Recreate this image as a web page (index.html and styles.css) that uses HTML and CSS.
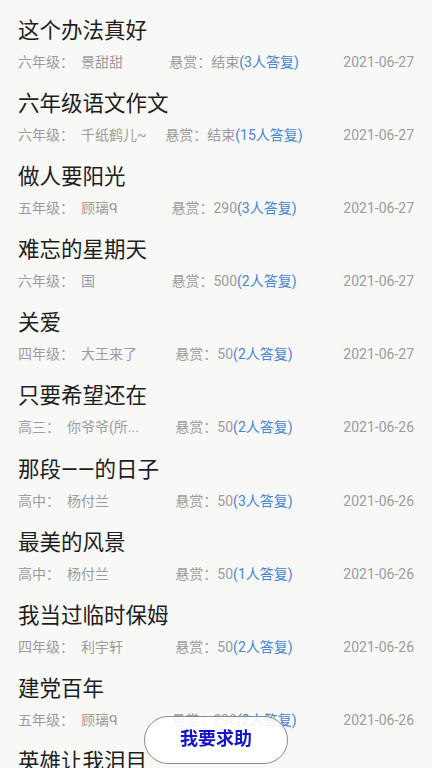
FILE: index.html
```html
<!DOCTYPE html>
<html lang="zh-CN">
<head>
<meta charset="utf-8">
<title>求助列表</title>
<link rel="stylesheet" href="styles.css">
</head>
<body>
<div class="list">
  <div class="item"><div class="title">这个办法真好</div><div class="meta"><span class="who"><span class="grade">六年级：</span><span class="name">景甜甜</span></span><span class="reward">悬赏：结束<span class="ans">(3人答复)</span></span><span class="date">2021-06-27</span></div></div>
  <div class="item"><div class="title">六年级语文作文</div><div class="meta"><span class="who"><span class="grade">六年级：</span><span class="name">千纸鹤儿~</span></span><span class="reward">悬赏：结束<span class="ans">(15人答复)</span></span><span class="date">2021-06-27</span></div></div>
  <div class="item"><div class="title">做人要阳光</div><div class="meta"><span class="who"><span class="grade">五年级：</span><span class="name">顾璃ᑫ</span></span><span class="reward">悬赏：290<span class="ans">(3人答复)</span></span><span class="date">2021-06-27</span></div></div>
  <div class="item"><div class="title">难忘的星期天</div><div class="meta"><span class="who"><span class="grade">六年级：</span><span class="name">国</span></span><span class="reward">悬赏：500<span class="ans">(2人答复)</span></span><span class="date">2021-06-27</span></div></div>
  <div class="item"><div class="title">关爱</div><div class="meta"><span class="who"><span class="grade">四年级：</span><span class="name">大王来了</span></span><span class="reward">悬赏：50<span class="ans">(2人答复)</span></span><span class="date">2021-06-27</span></div></div>
  <div class="item"><div class="title">只要希望还在</div><div class="meta"><span class="who"><span class="grade">高三：</span><span class="name">你爷爷(所...</span></span><span class="reward">悬赏：50<span class="ans">(2人答复)</span></span><span class="date">2021-06-26</span></div></div>
  <div class="item"><div class="title">那段——的日子</div><div class="meta"><span class="who"><span class="grade">高中：</span><span class="name">杨付兰</span></span><span class="reward">悬赏：50<span class="ans">(3人答复)</span></span><span class="date">2021-06-26</span></div></div>
  <div class="item"><div class="title">最美的风景</div><div class="meta"><span class="who"><span class="grade">高中：</span><span class="name">杨付兰</span></span><span class="reward">悬赏：50<span class="ans">(1人答复)</span></span><span class="date">2021-06-26</span></div></div>
  <div class="item"><div class="title">我当过临时保姆</div><div class="meta"><span class="who"><span class="grade">四年级：</span><span class="name">利宇轩</span></span><span class="reward">悬赏：50<span class="ans">(2人答复)</span></span><span class="date">2021-06-26</span></div></div>
  <div class="item"><div class="title">建党百年</div><div class="meta"><span class="who"><span class="grade">五年级：</span><span class="name">顾璃ᑫ</span></span><span class="reward">悬赏：290<span class="ans">(2人答复)</span></span><span class="date">2021-06-26</span></div></div>
  <div class="item"><div class="title">英雄让我泪目</div></div>
</div>
<button class="help">我要求助</button>
</body>
</html>
```
FILE: styles.css
```css
html, body {
  margin: 0;
  padding: 0;
  height: 768px;
  overflow: hidden;
  background: #f8f8f7;
  font-family: Roboto, "Noto Sans CJK SC", sans-serif;
}
.list {
  display: flex;
  flex-direction: column;
}
.item {
  height: 73.1px;
  box-sizing: border-box;
  padding: 16px 18px 0 18px;
}
.title {
  font-size: 21.5px;
  line-height: 30px;
  color: #1e1e1e;
}
.meta {
  margin-top: 6px;
  display: grid;
  grid-template-columns: 132px 168px 1fr;
  align-items: center;
  font-size: 14px;
  line-height: 20px;
  color: #9c9c9c;
}
.who {
  display: flex;
  white-space: nowrap;
}
.name {
  margin-left: 7px;
}
.reward {
  text-align: center;
  white-space: nowrap;
}
.ans {
  color: #4a85d0;
}
.date {
  text-align: right;
}
.help {
  position: fixed;
  left: 144px;
  top: 716px;
  width: 144px;
  height: 48px;
  border-radius: 24px;
  border: 1px solid #8c8c8c;
  background: rgba(255, 255, 255, 0.88);
  color: #1414c8;
  font-family: Roboto, "Noto Sans CJK SC", sans-serif;
  font-size: 18px;
  line-height: 44px;
  font-weight: bold;
  padding: 0 0 2px 0;
}
```
